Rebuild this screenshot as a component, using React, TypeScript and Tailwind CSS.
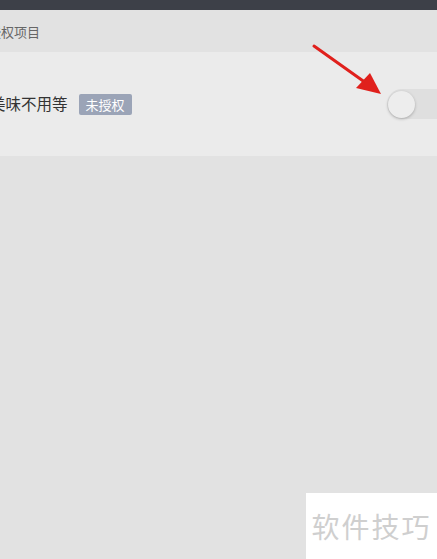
import React from "react";

export default function App() {
  const font = { fontFamily: '"Noto Sans CJK SC", "Noto Sans", sans-serif' };
  return (
    <div
      className="relative flex h-[559px] w-[437px] flex-col overflow-hidden bg-[#e2e2e2]"
      style={font}
    >
      <div className="h-[10px] shrink-0 bg-[#3d4048]" />
      <div className="flex h-[42px] shrink-0 items-center bg-[#e2e2e2]">
        <span className="ml-[-12px] text-[13px] leading-none text-[#666]">授权项目</span>
      </div>
      <div className="flex h-[104px] shrink-0 items-center justify-between bg-[#ebebeb]">
        <div className="flex items-center">
          <span className="ml-[-10px] text-[15.5px] leading-none text-[#333]">美味不用等</span>
          <span className="ml-[11px] flex h-[21px] w-[53px] items-center justify-center rounded-[2px] bg-[#9ba4b7] text-[13px] leading-none text-white">
            未授权
          </span>
        </div>
        <div className="mr-[-20px] flex h-[30px] w-[70px] items-center rounded-full bg-[#dfdfdf] pl-[1px]">
          <div className="h-[27px] w-[27px] rounded-full bg-[#ededed] shadow-[0_1px_3px_rgba(0,0,0,0.25)]" />
        </div>
      </div>
      <div className="flex-1" />

      <svg
        className="pointer-events-none absolute left-0 top-0"
        width="437"
        height="559"
        viewBox="0 0 437 559"
      >
        <line x1="314" y1="46" x2="366" y2="83" stroke="#e0201c" strokeWidth="3" strokeLinecap="round" />
        <polygon points="381,94 356,88 370,73" fill="#e0201c" />
      </svg>

      <div className="absolute bottom-0 right-0 flex h-[66px] w-[131px] items-center justify-center bg-white">
        <span className="text-[28px] leading-none tracking-[2px] text-[#cfcfcf]">软件技巧</span>
      </div>
    </div>
  );
}
